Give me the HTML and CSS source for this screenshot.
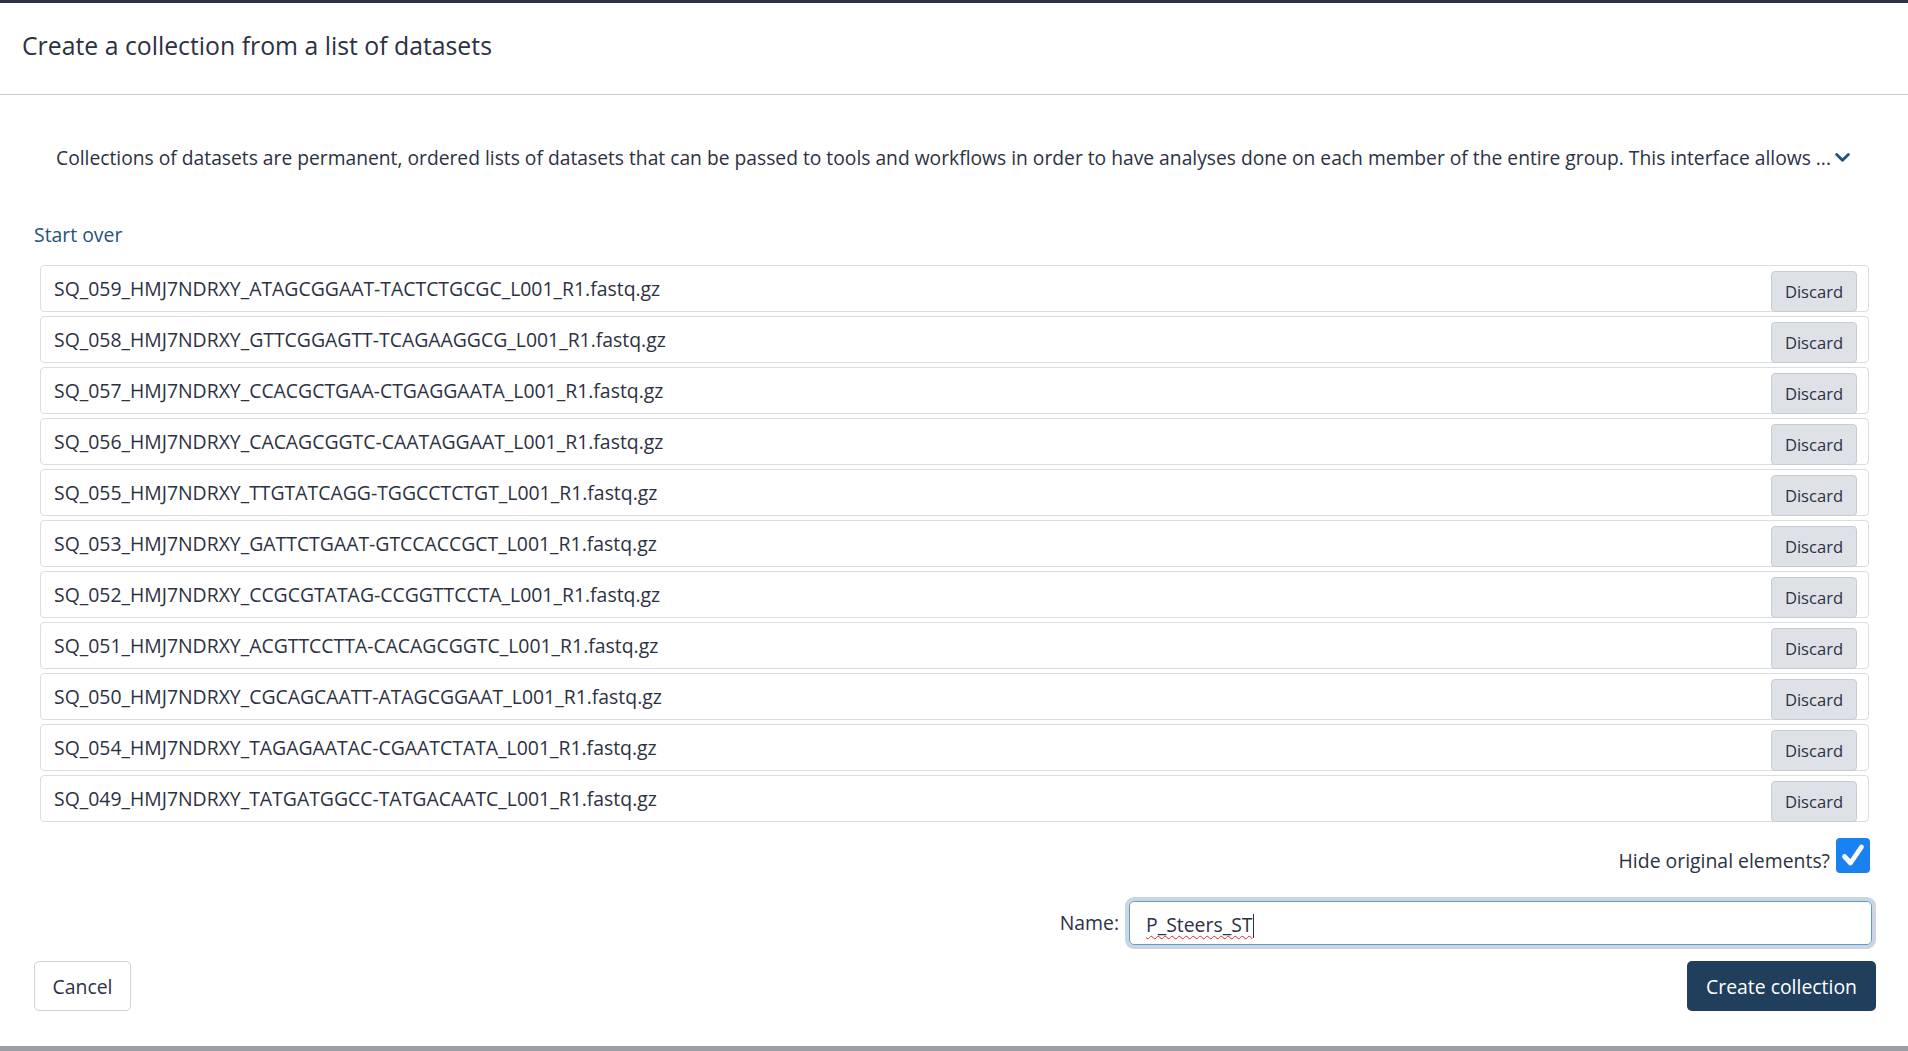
FILE: index.html
```html
<!DOCTYPE html>
<html lang="en">
<head>
<meta charset="utf-8">
<title>Create a collection from a list of datasets</title>
<link rel="stylesheet" href="styles.css">
</head>
<body>
<div class="topstrip"></div>
<div class="modal">
  <header class="modal-header">
    <h5 class="modal-title">Create a collection from a list of datasets</h5>
  </header>
  <main class="modal-body">
    <p class="help">Collections of datasets are permanent, ordered lists of datasets that can be passed to tools and workflows in order to have analyses done on each member of the entire group. This interface allows ...<svg class="chev" viewBox="0 0 16 16" width="17" height="17"><path d="M2.5 5.2 L8 10.6 L13.5 5.2" fill="none" stroke="#25537b" stroke-width="2.8" stroke-linecap="round" stroke-linejoin="round"/></svg></p>
    <a class="start-over" href="#">Start over</a>
    <ul class="elements">
      <li class="element"><span class="name">SQ_059_HMJ7NDRXY_ATAGCGGAAT-TACTCTGCGC_L001_R1.fastq.gz</span><button class="btn-discard">Discard</button></li>
      <li class="element"><span class="name">SQ_058_HMJ7NDRXY_GTTCGGAGTT-TCAGAAGGCG_L001_R1.fastq.gz</span><button class="btn-discard">Discard</button></li>
      <li class="element"><span class="name">SQ_057_HMJ7NDRXY_CCACGCTGAA-CTGAGGAATA_L001_R1.fastq.gz</span><button class="btn-discard">Discard</button></li>
      <li class="element"><span class="name">SQ_056_HMJ7NDRXY_CACAGCGGTC-CAATAGGAAT_L001_R1.fastq.gz</span><button class="btn-discard">Discard</button></li>
      <li class="element"><span class="name">SQ_055_HMJ7NDRXY_TTGTATCAGG-TGGCCTCTGT_L001_R1.fastq.gz</span><button class="btn-discard">Discard</button></li>
      <li class="element"><span class="name">SQ_053_HMJ7NDRXY_GATTCTGAAT-GTCCACCGCT_L001_R1.fastq.gz</span><button class="btn-discard">Discard</button></li>
      <li class="element"><span class="name">SQ_052_HMJ7NDRXY_CCGCGTATAG-CCGGTTCCTA_L001_R1.fastq.gz</span><button class="btn-discard">Discard</button></li>
      <li class="element"><span class="name">SQ_051_HMJ7NDRXY_ACGTTCCTTA-CACAGCGGTC_L001_R1.fastq.gz</span><button class="btn-discard">Discard</button></li>
      <li class="element"><span class="name">SQ_050_HMJ7NDRXY_CGCAGCAATT-ATAGCGGAAT_L001_R1.fastq.gz</span><button class="btn-discard">Discard</button></li>
      <li class="element"><span class="name">SQ_054_HMJ7NDRXY_TAGAGAATAC-CGAATCTATA_L001_R1.fastq.gz</span><button class="btn-discard">Discard</button></li>
      <li class="element"><span class="name">SQ_049_HMJ7NDRXY_TATGATGGCC-TATGACAATC_L001_R1.fastq.gz</span><button class="btn-discard">Discard</button></li>
    </ul>
    <div class="hide-row">
      <span class="hide-label">Hide original elements?</span>
      <span class="checkbox"><svg viewBox="0 0 34 35" width="34" height="35"><path d="M8.5 18.5 L14.5 25 L25.5 9" fill="none" stroke="#fff" stroke-width="4.8" stroke-linecap="round" stroke-linejoin="round"/></svg></span>
    </div>
    <div class="name-row">
      <label class="name-label">Name:</label>
      <div class="name-input"><span class="typed">P_Steers_ST</span><span class="caret"></span></div>
    </div>
    <div class="actions">
      <button class="btn-cancel">Cancel</button>
      <button class="btn-create">Create collection</button>
    </div>
  </main>
</div>
<div class="bottomstrip"></div>
</body>
</html>
```

FILE: styles.css
```css
html, body {
  margin: 0;
  padding: 0;
  background: #ffffff;
}
body {
  font-family: "Open Sans", "Noto Sans", sans-serif;
  color: #2c3143;
  width: 1908px;
  height: 1051px;
  overflow: hidden;
  display: flex;
  flex-direction: column;
}
.topstrip {
  height: 3px;
  background: #2c3143;
  flex: none;
}
.modal {
  flex: 1;
  display: flex;
  flex-direction: column;
}
.modal-header {
  height: 92px;
  box-sizing: border-box;
  border-bottom: 1px solid #c3c9d1;
  display: flex;
  align-items: center;
  padding: 0 22px 7px;
}
.modal-title {
  margin: 0;
  font-size: 24.8px;
  line-height: 30px;
  font-weight: 400;
  color: #2c3143;
}
.modal-body {
  padding: 0 32px 0 34px;
  display: flex;
  flex-direction: column;
}
.help {
  margin: 51px 0 0 22px;
  font-size: 19.25px;
  line-height: 24px;
  white-space: nowrap;
  display: flex;
  align-items: center;
}
.chev {
  margin-left: 3px;
  margin-top: -2px;
}
.start-over {
  margin-top: 53px;
  color: #25537b;
  text-decoration: none;
  font-size: 19.4px;
  line-height: 24px;
  align-self: flex-start;
}
.elements {
  list-style: none;
  margin: 18px 7px 0 6px;
  padding: 0;
  display: flex;
  flex-direction: column;
  gap: 4px;
}
.element {
  height: 47px;
  box-sizing: border-box;
  border: 1px solid #dadde2;
  border-radius: 4px;
  display: flex;
  justify-content: space-between;
  align-items: flex-end;
  padding: 0 11px 0 13px;
}
.element .name {
  align-self: center;
  font-size: 19.4px;
  line-height: 24px;
}
.btn-discard {
  height: 41px;
  width: 86px;
  margin-bottom: -1px;
  border: 1px solid #c6ccd3;
  border-radius: 4px;
  background: #dee2e7;
  color: #2c3143;
  font-family: inherit;
  font-size: 16.6px;
  padding: 0;
}
.hide-row {
  margin-top: 16px;
  display: flex;
  justify-content: flex-end;
  align-items: flex-end;
  gap: 6px;
  padding-right: 6px;
}
.hide-label {
  font-size: 19.4px;
  line-height: 24px;
}
.checkbox {
  width: 34px;
  height: 35px;
  border-radius: 4px;
  background: #1a82f0;
  display: block;
}
.checkbox svg { display: block; }
.name-row {
  margin-top: 24px;
  display: flex;
  justify-content: flex-end;
  align-items: center;
  gap: 10px;
}
.name-label {
  font-size: 19.4px;
  line-height: 24px;
  margin-top: 0;
}
.name-input {
  width: 743px;
  height: 44px;
  box-sizing: border-box;
  border: 1px solid #5b9bd8;
  border-radius: 5px;
  box-shadow: 0 0 0 4px #ccd6e0;
  margin: 4px 4px 4px 0;
  display: flex;
  align-items: center;
  padding: 3px 0 0 16px;
  font-size: 19.4px;
}
.typed {
  text-decoration: underline wavy #e8262b;
  text-decoration-thickness: 1px;
  text-underline-offset: 3px;
}
.caret {
  width: 1px;
  height: 24px;
  background: #2c3143;
  margin-left: 1px;
  margin-top: 2px;
}
.actions {
  margin-top: 12px;
  display: flex;
  justify-content: space-between;
}
.btn-cancel {
  width: 97px;
  height: 50px;
  border: 1px solid #cfd3d8;
  border-radius: 5px;
  background: #ffffff;
  color: #2c3143;
  font-family: inherit;
  font-size: 19.4px;
  padding: 0;
}
.btn-create {
  width: 189px;
  height: 50px;
  border: none;
  border-radius: 5px;
  background: #1f3f5c;
  color: #ffffff;
  font-family: inherit;
  font-size: 19.4px;
  padding: 0;
}
.bottomstrip {
  height: 5px;
  background: #9b9ea4;
  flex: none;
}
```
